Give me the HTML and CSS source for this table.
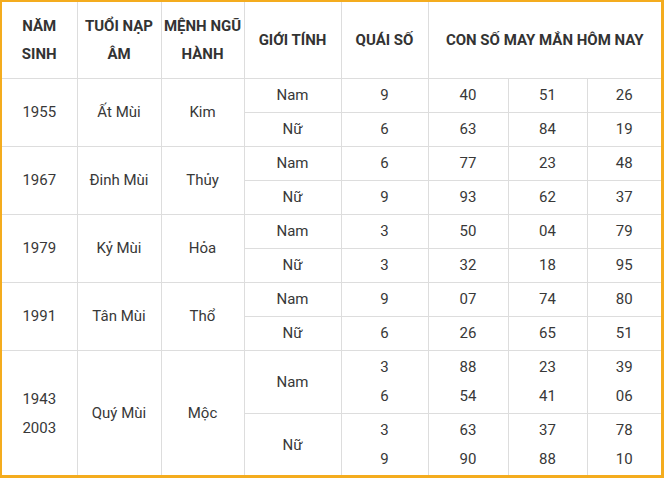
FILE: index.html
```
<!DOCTYPE html>
<html lang="vi">
<head>
<meta charset="utf-8">
<link rel="stylesheet" href="styles.css">
</head>
<body>
<div class="frame">
<table class="lucky">
<colgroup>
<col class="c1"><col class="c2"><col class="c3"><col class="c4"><col class="c5"><col class="c6"><col class="c7"><col class="c8">
</colgroup>
<thead>
<tr>
<th>NĂM<br>SINH</th>
<th>TUỔI NẠP<br>ÂM</th>
<th>MỆNH NGŨ<br>HÀNH</th>
<th>GIỚI TÍNH</th>
<th>QUÁI SỐ</th>
<th colspan="3">CON SỐ MAY MẮN HÔM NAY</th>
</tr>
</thead>
<tbody>
<tr><td rowspan="2">1955</td><td rowspan="2">Ất Mùi</td><td rowspan="2">Kim</td><td>Nam</td><td>9</td><td>40</td><td>51</td><td>26</td></tr>
<tr><td>Nữ</td><td>6</td><td>63</td><td>84</td><td>19</td></tr>
<tr><td rowspan="2">1967</td><td rowspan="2">Đinh Mùi</td><td rowspan="2">Thủy</td><td>Nam</td><td>6</td><td>77</td><td>23</td><td>48</td></tr>
<tr><td>Nữ</td><td>9</td><td>93</td><td>62</td><td>37</td></tr>
<tr><td rowspan="2">1979</td><td rowspan="2">Kỷ Mùi</td><td rowspan="2">Hỏa</td><td>Nam</td><td>3</td><td>50</td><td>04</td><td>79</td></tr>
<tr><td>Nữ</td><td>3</td><td>32</td><td>18</td><td>95</td></tr>
<tr><td rowspan="2">1991</td><td rowspan="2">Tân Mùi</td><td rowspan="2">Thổ</td><td>Nam</td><td>9</td><td>07</td><td>74</td><td>80</td></tr>
<tr><td>Nữ</td><td>6</td><td>26</td><td>65</td><td>51</td></tr>
<tr class="tall"><td rowspan="2">1943<br>2003</td><td rowspan="2">Quý Mùi</td><td rowspan="2">Mộc</td><td>Nam</td><td>3<br>6</td><td>88<br>54</td><td>23<br>41</td><td>39<br>06</td></tr>
<tr class="tall"><td>Nữ</td><td>3<br>9</td><td>63<br>90</td><td>37<br>88</td><td>78<br>10</td></tr>
</tbody>
</table>
</div>
</body>
</html>
```
FILE: styles.css
```
html, body {
  margin: 0;
  padding: 0;
  background: #ffffff;
}
.frame {
  width: 659px;
  height: 473px;
  border-style: solid;
  border-color: #f4ac1e;
  border-width: 2px 3px 3px 2px;
  overflow: hidden;
  background: #ffffff;
}
.lucky {
  width: 659px;
  border-collapse: collapse;
  border-style: hidden;
  table-layout: fixed;
  font-family: Roboto, "Liberation Sans", sans-serif;
  font-size: 15px;
  color: #383838;
}
.c1 { width: 75px; }
.c2 { width: 84px; }
.c3 { width: 83px; }
.c4 { width: 97px; }
.c5 { width: 87px; }
.c6 { width: 80px; }
.c7 { width: 79px; }
.c8 { width: 74px; }
.lucky th,
.lucky td {
  border: 1px solid #dddddd;
  text-align: center;
  vertical-align: middle;
  padding: 2px 0;
  line-height: 29px;
}
.lucky th {
  font-weight: 700;
  color: #333333;
  line-height: 28px;
  padding: 10px 0;
  height: 56px;
}
.lucky tbody tr td {
  height: 29px;
}
.lucky tbody tr.tall td {
  height: 58px;
}
```
